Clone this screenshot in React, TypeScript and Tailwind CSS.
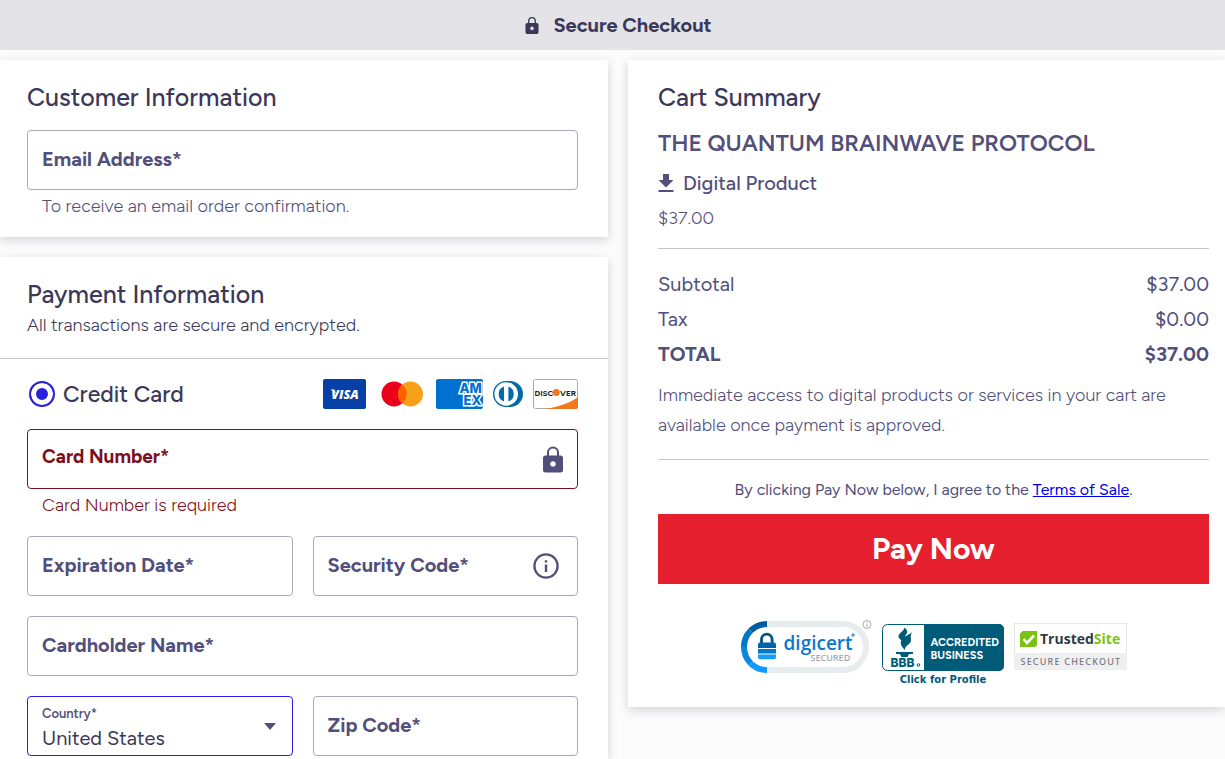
import type { ReactNode } from "react";

const fieldBox = "flex h-[60px] min-w-0 items-center rounded-[4px] border px-[14px]";

function LockIcon({ className }: { className: string }) {
  return (
    <svg viewBox="0 0 20 26" className={className} fill="currentColor" aria-hidden="true">
      <path
        fillRule="evenodd"
        d="M4 9V6a6 6 0 0 1 12 0v3h1.500a2.500 2.500 0 0 1 2.500 2.500v12a2.500 2.500 0 0 1-2.500 2.500h-15A2.500 2.500 0 0 1 0 23.500v-12A2.500 2.500 0 0 1 2.500 9zm2 0h8V6a4 4 0 0 0-8 0zm4 5.700a2.700 2.700 0 1 0 0 5.400a2.700 2.700 0 0 0 0-5.400z"
      />
    </svg>
  );
}

function Field({ id, label, error = false, children }: { id: string; label: string; error?: boolean; children?: ReactNode }) {
  return (
    <div className={`${fieldBox} ${error ? "border-[#7d0f20]" : "border-[#a9a7bd]"}`}>
      <label
        htmlFor={id}
        className={`shrink-0 leading-6 font-bold ${error ? "pb-1 text-[19px] text-[#7d0f20]" : "pb-[2px] text-[20px] text-[#524f7b]"}`}
      >
        {label}
      </label>
      <input id={id} className="h-full w-0 min-w-0 flex-1 bg-transparent px-2 text-[20px] outline-none" />
      {children}
    </div>
  );
}

function CardBrands() {
  return (
    <div className="flex h-[30px] items-center">
      <svg width="43" height="30" viewBox="0 0 43 30" role="img" aria-label="Visa">
        <rect width="43" height="30" rx="2" fill="#063fa5" />
        <text x="22" y="19.500" textAnchor="middle" fontFamily="Open Sans, sans-serif" fontSize="12.500" fontWeight="800" fontStyle="italic" fill="#fff">VISA</text>
        <path d="M7.500 10.500h4l1.500 4z" fill="#fff" />
      </svg>
      <svg className="ml-[14px]" width="44" height="30" viewBox="0 0 44 30" role="img" aria-label="Mastercard">
        <circle cx="14" cy="15" r="12.500" fill="#eb001b" />
        <circle cx="30.500" cy="15" r="12.500" fill="#f9a01b" />
        <path d="M22.250 5.500a12.500 12.500 0 0 1 0 19a12.500 12.500 0 0 1 0-19z" fill="#ff5f00" />
      </svg>
      <svg className="ml-[12px]" width="47" height="30" viewBox="0 0 47 30" role="img" aria-label="American Express">
        <defs>
          <clipPath id="amex"><rect width="47" height="30" rx="2" /></clipPath>
        </defs>
        <g clipPath="url(#amex)">
          <rect width="47" height="30" fill="#0171cf" />
          <g fontFamily="Inter, sans-serif" fontSize="13" fontWeight="800" fill="#0171cf" stroke="#fff" strokeWidth="3" paintOrder="stroke">
            <text x="23.500" y="13.500">AM</text>
            <text x="27.500" y="25.500">EX</text>
          </g>
        </g>
      </svg>
      <svg className="ml-[10px]" width="30" height="30" viewBox="0 0 30 30" role="img" aria-label="Diners Club">
        <path d="M13 2h4a13 13 0 0 1 0 26h-4a13 13 0 0 1 0-26z" fill="#006ba6" />
        <circle cx="13.200" cy="15" r="11.800" fill="#fff" />
        <path d="M11 7.600a7.800 7.800 0 0 0 0 14.800zM15.400 7.600a7.800 7.800 0 0 1 0 14.800z" fill="#006ba6" />
      </svg>
      <svg className="ml-[10px]" width="45" height="30" viewBox="0 0 45 30" role="img" aria-label="Discover">
        <rect x=".5" y=".5" width="44" height="29" rx="2" fill="#fff" stroke="#aaa" />
        <path d="M11 30C25 28 37 24 45 18v10a2 2 0 0 1-2 2z" fill="#f27721" />
        <g fontFamily="Figtree, Inter, sans-serif" fontSize="8.200" fontWeight="700" fill="#201d1c">
          <text x="1.500" y="16.500">DISC</text>
          <text x="27" y="16.500">VER</text>
        </g>
        <circle cx="23.300" cy="13.500" r="3.500" fill="#f27721" />
      </svg>
    </div>
  );
}

function DigicertSeal() {
  return (
    <svg width="132" height="56" viewBox="0 0 132 56" role="img" aria-label="DigiCert Secured">
      <rect x="4" y="5" width="122" height="46" rx="23" fill="#fff" stroke="#e7ecef" strokeWidth="6" />
      <g fill="none" strokeWidth="6">
        <path d="M27 5A23 23 0 0 0 10.700 11.700" stroke="#005b9f" />
        <path d="M10.700 11.700A23 23 0 0 0 4 28" stroke="#0078c8" />
        <path d="M4 28A23 23 0 0 0 10.700 44.300" stroke="#0a87df" />
        <path d="M10.700 44.300A23 23 0 0 0 27 51" stroke="#129aff" />
      </g>
      <path d="M21.500 25v-4.500a5.300 5.300 0 0 1 10.600 0V25" fill="none" stroke="#005486" strokeWidth="2.800" />
      <path d="M18 25.500a2 2 0 0 1 2-2h14a2 2 0 0 1 2 2V29H18z" fill="#0064ad" />
      <path d="M18 30h18v4.500H18z" fill="#0079d0" />
      <path d="M18 35.500h18v2.800a2 2 0 0 1-2 2H20a2 2 0 0 1-2-2z" fill="#159cff" />
      <text x="43.500" y="30.500" fontFamily="Open Sans, sans-serif" fontSize="19" fontWeight="600" fill="#0878cf">digicert</text>
      <circle cx="113" cy="16" r="1.200" fill="none" stroke="#0878cf" />
      <text x="70.500" y="41.500" fontFamily="Open Sans, sans-serif" fontSize="9" fontWeight="600" fill="#a2abb5">SECURED</text>
      <circle cx="127" cy="5.500" r="4" fill="#fff" stroke="#a4acb5" />
      <path d="M127 4.800v3.200M127 3v1" stroke="#a4acb5" />
    </svg>
  );
}

function BbbSeal() {
  return (
    <svg width="122" height="64" viewBox="0 0 122 64" role="img" aria-label="BBB Accredited Business">
      <rect x=".5" y=".5" width="121" height="46" rx="5" fill="#fff" stroke="#005b78" />
      <path d="M42 0h75a5 5 0 0 1 5 5v37a5 5 0 0 1-5 5H42z" fill="#005b78" />
      <path d="M22 3.500c1.500 3-5.500 5-5.500 9 0 3.500 6 3.500 7.500 8.500 2-4-1.500-5-1-8 .5-2.500 3-4 2-6.500C24.500 5 23 4 22 3.500zM30 8c-2.500 3-9.500 4.500-11 9-1 3.500 1 6 4 9-.5-4.500 5-5 6-9 .5-2.500-1.500-4 1-9zM14 28h17v2h-4l-1.500 3h-6L18 30h-4z" fill="#005b78" />
      <text x="8.500" y="43" fontFamily="Inter, sans-serif" fontSize="12" fontWeight="800" fill="#005b78">BBB</text>
      <circle cx="36.500" cy="41" r="1.300" fill="none" stroke="#005b78" />
      <g fontFamily="Figtree, Inter, sans-serif" fontSize="11" fontWeight="700" fill="#fff">
        <text x="48.500" y="22">ACCREDITED</text>
        <text x="48.500" y="35">BUSINESS</text>
      </g>
      <text x="61" y="59" textAnchor="middle" fontFamily="DejaVu Sans, sans-serif" fontSize="10" fontWeight="700" fill="#005b78">Click for Profile</text>
    </svg>
  );
}

function TrustedSiteSeal() {
  return (
    <svg width="113" height="47" viewBox="0 0 113 47" role="img" aria-label="TrustedSite secure checkout">
      <rect x=".5" y=".5" width="112" height="46" fill="#fff" stroke="#e7e7e8" />
      <path d="M0 30h113v17H0z" fill="#efeff1" />
      <path d="M8.500 8H23v13a3 3 0 0 1-3 3H6V11z" fill="#79c410" />
      <path d="M9.500 16l3.500 4 7-7.500" fill="none" stroke="#fff" strokeWidth="2.600" />
      <text x="26" y="20.500" fontFamily="Open Sans, sans-serif" fontSize="14" fontWeight="700" fill="#333a40">
        Trusted<tspan fill="#79c410">Site</tspan>
      </text>
      <text x="6.500" y="41.500" fontFamily="Noto Sans, sans-serif" fontSize="9" fontWeight="500" letterSpacing="1.200" fill="#777980">SECURE CHECKOUT</text>
    </svg>
  );
}

export default function App() {
  return (
    <div className="flex min-h-screen flex-col bg-[#fcfcfc] font-['Figtree','Inter',sans-serif] text-[#524f7b]">
      <header className="flex h-[50px] items-center justify-center gap-[14px] bg-[#e4e3e8] pl-3 text-[#3b3859]">
        <LockIcon className="h-[17px] w-[14px]" />
        <h1 className="text-[20px] leading-6 font-bold">Secure Checkout</h1>
      </header>

      <main className="grid flex-1 grid-cols-[608fr_597fr] gap-5 pt-[10px]">
        <form className="flex min-w-0 flex-col gap-5">
          <section className="bg-white pt-[22px] pr-[30px] pb-[19px] pl-[27px] shadow-[0_3px_10px_rgba(50,48,80,0.2)]">
            <h2 className="mb-[18px] text-[25px] leading-[30px] font-medium text-[#3b3859]">Customer Information</h2>
            <Field id="email" label="Email Address*" />
            <p className="px-[15px] pt-1 text-[18px] leading-6 font-light">To receive an email order confirmation.</p>
          </section>

          <section className="flex-1 bg-white shadow-[0_3px_10px_rgba(50,48,80,0.2)]">
            <div className="border-b border-[#c5c4d0] pt-[22px] pr-[30px] pb-[21px] pl-[27px] text-[#3b3859]">
              <h2 className="text-[25px] leading-[30px] font-medium">Payment Information</h2>
              <p className="pt-1 text-[18px] leading-6 font-light">All transactions are secure and encrypted.</p>
            </div>

            <div className="pt-5 pr-[30px] pl-[27px]">
              <div className="mb-5 flex h-[30px] items-center justify-between">
                <label className="flex items-center gap-2 pl-[2px] text-[23px] leading-[30px] font-medium text-[#3b3859]">
                  <input
                    type="radio"
                    name="method"
                    defaultChecked
                    className="size-[26px] appearance-none rounded-full border-2 border-[#2a1fdc] bg-[#2a1fdc] shadow-[inset_0_0_0_5px_white]"
                  />
                  Credit Card
                </label>
                <CardBrands />
              </div>

              <Field id="card" label="Card Number*" error>
                <LockIcon className="h-[27px] w-5 shrink-0" />
              </Field>
              <p className="px-[15px] pt-1 pb-[19px] text-[18px] leading-6 font-light text-[#7d0f20]">Card Number is required</p>

              <div className="grid grid-cols-2 gap-5">
                <Field id="expiry" label="Expiration Date*" />
                <Field id="cvc" label="Security Code*">
                  <button type="button" aria-label="About the security code" className="mr-1 shrink-0">
                    <svg width="26" height="26" viewBox="0 0 26 26" fill="none" stroke="currentColor" aria-hidden="true">
                      <circle cx="13" cy="13" r="11.600" strokeWidth="2.300" />
                      <path d="M13 11.500V19M13 7.200v2.300" strokeWidth="2.400" />
                    </svg>
                  </button>
                </Field>
                <div className="col-span-2">
                  <Field id="name" label="Cardholder Name*" />
                </div>
                <div className="grid h-[60px] min-w-0 rounded-[4px] border border-[#2a1fdc]">
                  <label htmlFor="country" className="z-10 col-start-1 row-start-1 self-start px-[14px] pt-[9px] text-[13px] leading-4 font-semibold">
                    Country*
                  </label>
                  <select
                    id="country"
                    className="col-start-1 row-start-1 min-w-0 appearance-none bg-transparent px-[14px] pt-[23px] text-[20px] leading-6 text-[#3b3859] outline-none"
                  >
                    <option>United States</option>
                  </select>
                  <svg className="pointer-events-none col-start-1 row-start-1 mr-4 self-center justify-self-end" width="12" height="7" viewBox="0 0 12 7" aria-hidden="true">
                    <path d="M0 0h12L6 7z" fill="currentColor" />
                  </svg>
                </div>
                <Field id="zip" label="Zip Code*" />
              </div>
            </div>
          </section>
        </form>

        <aside className="min-w-0 self-start bg-white pt-[22px] pr-4 pb-[19px] pl-[30px] shadow-[0_3px_10px_rgba(50,48,80,0.2)]">
          <h2 className="text-[25px] leading-[30px] font-medium text-[#3b3859]">Cart Summary</h2>
          <h3 className="mt-4 text-[23px] leading-[30px] font-semibold">THE QUANTUM BRAINWAVE PROTOCOL</h3>
          <p className="mt-[10px] flex items-center gap-[9px] text-[20px] leading-[30px] font-medium">
            <svg width="16" height="19" viewBox="0 0 16 19" fill="currentColor" aria-hidden="true">
              <path d="M5 0h6v6h4.500L8 13.500.5 6H5zM.5 16h15v2H.5z" />
            </svg>
            Digital Product
          </p>
          <p className="mt-2 text-[18px] leading-6 font-light">$37.00</p>

          <dl className="mt-[18px] grid grid-cols-2 gap-y-[5px] border-t border-[#c5c4d0] pt-5 text-[20px] leading-[30px]">
            <dt>Subtotal</dt>
            <dd className="text-right">$37.00</dd>
            <dt>Tax</dt>
            <dd className="text-right">$0.00</dd>
            <dt className="font-bold">TOTAL</dt>
            <dd className="text-right font-bold">$37.00</dd>
          </dl>
          <p className="mt-[11px] border-b border-[#c5c4d0] pb-[19px] text-[18px] leading-[30px] font-light">
            Immediate access to digital products or services in your cart are available once payment is approved.
          </p>

          <p className="mt-[18px] text-center text-[16px] leading-6">
            By clicking Pay Now below, I agree to the{" "}
            <a href="#terms" className="text-[#0000ee] underline">Terms of Sale</a>.
          </p>
          <button type="submit" className="mt-3 h-[70px] w-full bg-[#e6202f] pb-[2px] text-[30px] font-bold text-white">
            Pay Now
          </button>
          <div className="mt-[35px] flex items-start justify-center gap-[10px]">
            <DigicertSeal />
            <div className="mt-[5px]"><BbbSeal /></div>
            <div className="mt-1"><TrustedSiteSeal /></div>
          </div>
        </aside>
      </main>
    </div>
  );
}
